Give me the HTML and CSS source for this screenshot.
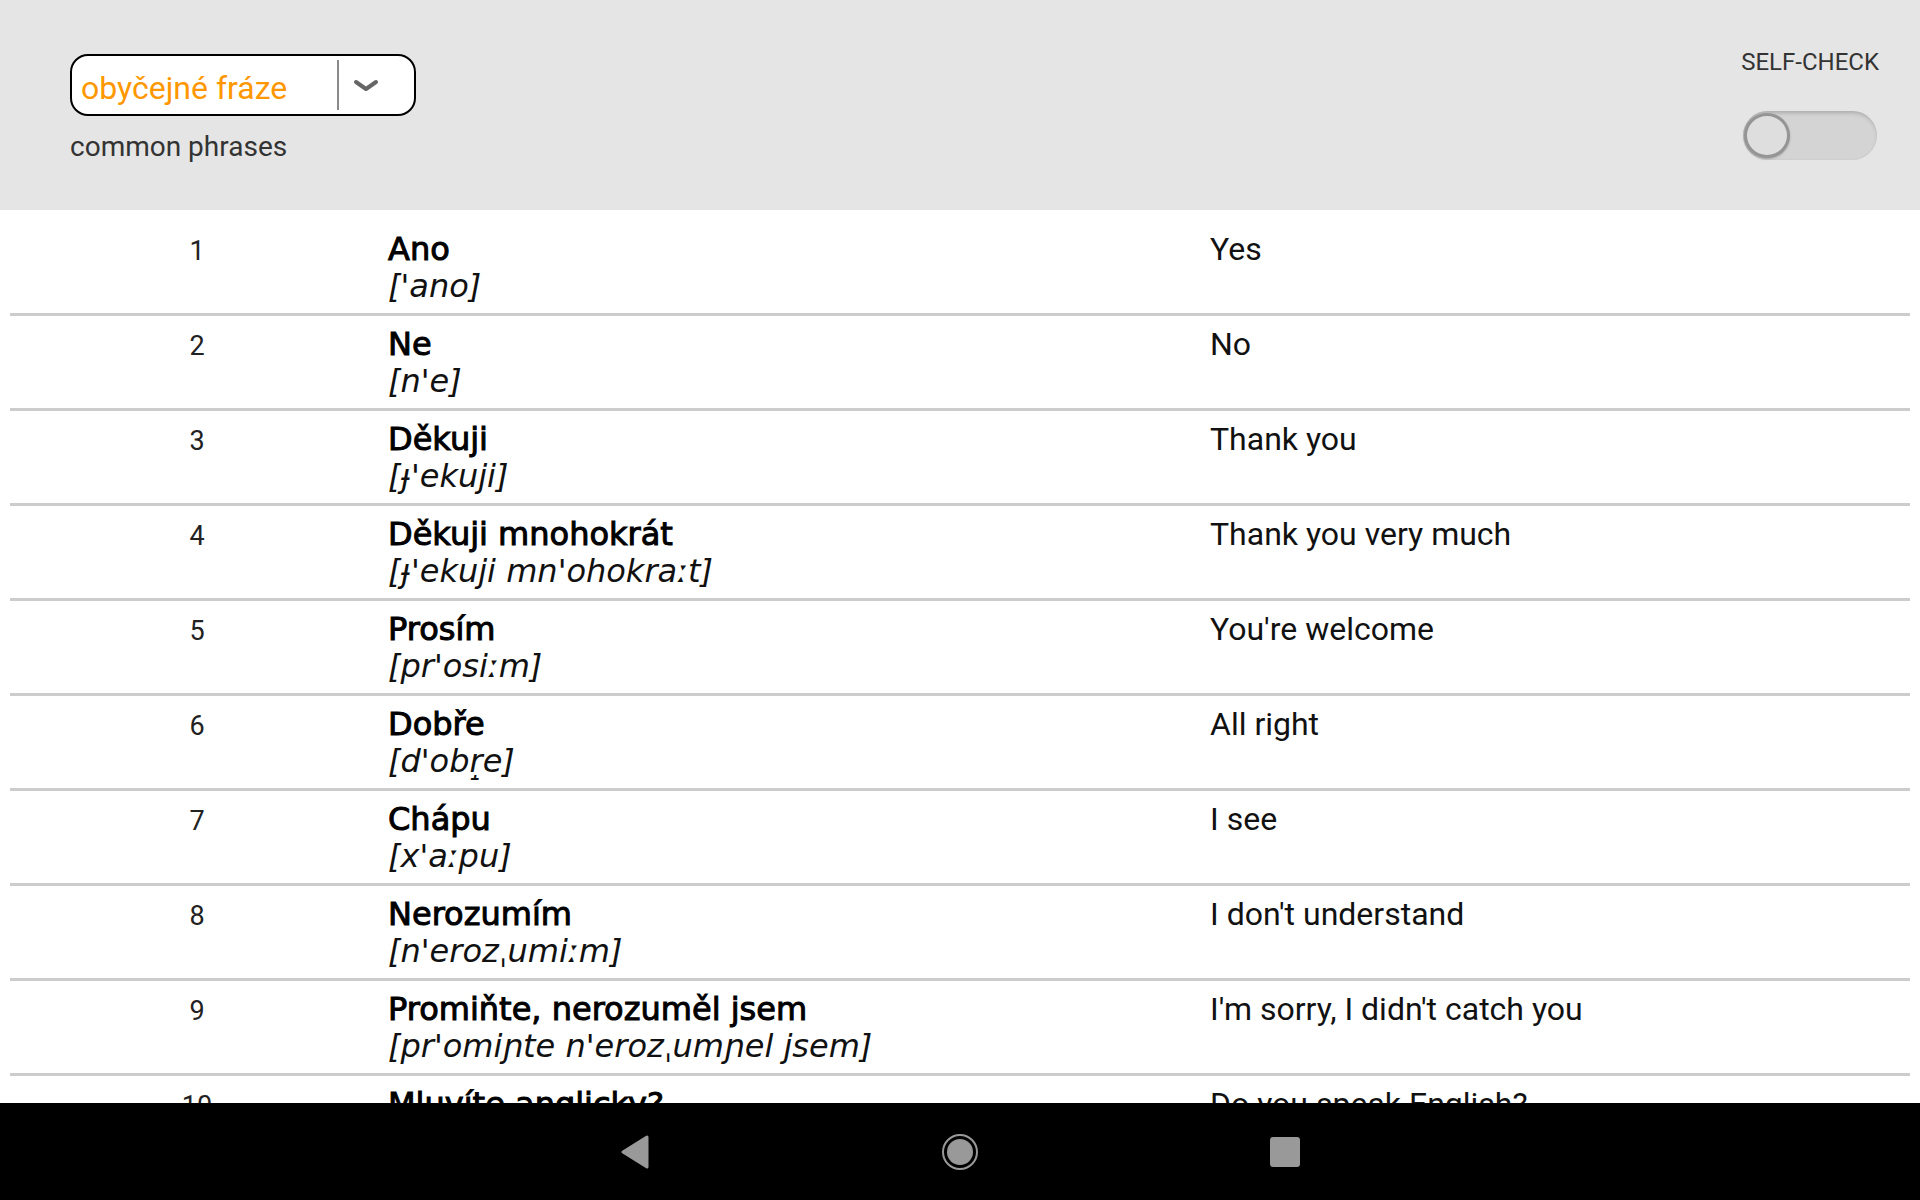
FILE: index.html
```html
<!DOCTYPE html>
<html lang="cs">
  <head>
    <meta charset="UTF-8" />
    <meta name="viewport" content="width=device-width, initial-scale=1.0" />
    <title>Phrasebook</title>
    <link rel="stylesheet" href="styles.css">
  </head>

  <body>
    <div class="screen">
      <!-- top bar -->
      <div class="top">
        <div class="topic">
          <div class="select">
            <span class="select-text">obyčejné fráze</span>
            <span class="select-line"></span>
            <svg class="select-arrow" width="26" height="16" viewBox="0 0 26 16">
              <path d="M3 4 L13 11 L23 4" fill="none" stroke="#666" stroke-width="4" stroke-linecap="round" stroke-linejoin="round" />
            </svg>
          </div>
          <div class="topic-en">common phrases</div>
        </div>
        <div class="check">
          <div class="check-label">SELF-CHECK</div>
          <div class="switch"><span class="thumb"></span></div>
        </div>
      </div>

      <!-- phrase list -->
      <ul class="list">
        <li class="row">
          <span class="num">1</span>
          <div class="cz"><b>Ano</b><i>['ano]</i></div>
          <span class="en">Yes</span>
        </li>
        <li class="row">
          <span class="num">2</span>
          <div class="cz"><b>Ne</b><i>[n'e]</i></div>
          <span class="en">No</span>
        </li>
        <li class="row">
          <span class="num">3</span>
          <div class="cz"><b>Děkuji</b><i>[ɟ'ekuji]</i></div>
          <span class="en">Thank you</span>
        </li>
        <li class="row">
          <span class="num">4</span>
          <div class="cz"><b>Děkuji mnohokrát</b><i>[ɟ'ekuji mn'ohokraːt]</i></div>
          <span class="en">Thank you very much</span>
        </li>
        <li class="row">
          <span class="num">5</span>
          <div class="cz"><b>Prosím</b><i>[pr'osiːm]</i></div>
          <span class="en">You're welcome</span>
        </li>
        <li class="row">
          <span class="num">6</span>
          <div class="cz"><b>Dobře</b><i>[d'obr̝e]</i></div>
          <span class="en">All right</span>
        </li>
        <li class="row">
          <span class="num">7</span>
          <div class="cz"><b>Chápu</b><i>[x'aːpu]</i></div>
          <span class="en">I see</span>
        </li>
        <li class="row">
          <span class="num">8</span>
          <div class="cz"><b>Nerozumím</b><i>[n'erozˌumiːm]</i></div>
          <span class="en">I don't understand</span>
        </li>
        <li class="row">
          <span class="num">9</span>
          <div class="cz"><b>Promiňte, nerozuměl jsem</b><i>[pr'omiɲte n'erozˌumɲel jsem]</i></div>
          <span class="en">I'm sorry, I didn't catch you</span>
        </li>
        <li class="row">
          <span class="num">10</span>
          <div class="cz"><b>Mluvíte anglicky?</b><i>[ml'uviːte 'anglɪtskɪ]</i></div>
          <span class="en">Do you speak English?</span>
        </li>
      </ul>

      <!-- android navigation -->
      <div class="nav">
        <span class="nav-btn">
          <svg width="30" height="34" viewBox="0 0 30 34">
            <path d="M27 2 L27 32 L3 17 Z" fill="#999" stroke="#999" stroke-width="3" stroke-linejoin="round" />
          </svg>
        </span>
        <span class="nav-btn">
          <svg width="38" height="38" viewBox="0 0 38 38">
            <circle cx="19" cy="19" r="17" fill="none" stroke="#999" stroke-width="2" />
            <circle cx="19" cy="19" r="13" fill="#999" />
          </svg>
        </span>
        <span class="nav-btn">
          <span class="square"></span>
        </span>
      </div>
    </div>
  </body>
</html>
```

FILE: styles.css
```css
* {
  margin: 0;
  padding: 0;
  box-sizing: border-box;
}

html,
body {
  height: 100%;
  overflow: hidden;
}

body {
  font-family: Roboto, "Liberation Sans", sans-serif;
  background-color: #fff;
  color: #000;
}

ul {
  list-style: none;
}

.screen {
  height: 1200px;
  display: flex;
  flex-direction: column;
}

/* 顶部 */
.top {
  height: 210px;
  flex-shrink: 0;
  background-color: #e5e5e5;
  display: flex;
  justify-content: space-between;
  align-items: flex-start;
}
.topic {
  padding: 54px 0 0 70px;
}
.select {
  width: 346px;
  height: 62px;
  border: 2px solid #000;
  border-radius: 18px;
  background-color: #fff;
  display: flex;
  align-items: flex-start;
}
.select-text {
  width: 265px;
  padding: 10px 0 0 9px;
  line-height: 44px;
  font-size: 32px;
  color: #ff9800;
  white-space: nowrap;
}
.select-line {
  width: 2px;
  height: 50px;
  margin-top: 4px;
  background-color: #8a8a8a;
}
.select-arrow {
  margin: 22px 0 0 14px;
}
.topic-en {
  margin-top: 15px;
  font-size: 28px;
  line-height: 32px;
  color: #333;
}

.check {
  padding: 48px 41px 0 0;
  display: flex;
  flex-direction: column;
  align-items: flex-end;
}
.check-label {
  font-size: 24px;
  line-height: 28px;
  color: #333;
}
.switch {
  width: 134px;
  height: 49px;
  margin: 35px 2px 0 0;
  border-radius: 25px;
  background-color: #d4d4d4;
  box-shadow: inset 1px 2px 4px rgba(0, 0, 0, 0.2);
  padding: 2px 0 0 1px;
}
.thumb {
  display: block;
  width: 46px;
  height: 45px;
  border-radius: 50%;
  background-color: #dedede;
  border: 3px solid #959595;
  box-shadow: 0 1px 2px rgba(0, 0, 0, 0.25);
}

/* 列表 */
.list {
  flex: 1;
  overflow: hidden;
  padding: 11px 10px 0;
}
.row {
  height: 95px;
  padding: 12px 0 0;
  border-bottom: 3px solid #ccc;
  display: grid;
  grid-template-columns: 374px 818px 1fr;
  column-gap: 4px;
  align-items: baseline;
}
.num {
  text-align: center;
  font-size: 27px;
  line-height: 33px;
  color: #222;
}
/* 捷克语：常规字重加描边 */
.cz b {
  display: block;
  font-family: "DejaVu Sans", sans-serif;
  font-weight: normal;
  font-size: 32px;
  line-height: 33px;
  -webkit-text-stroke: 1px #000;
  white-space: nowrap;
}
.cz i {
  display: block;
  font-family: "DejaVu Sans", sans-serif;
  font-style: oblique;
  font-size: 32px;
  line-height: 40px;
  color: #111;
  white-space: nowrap;
}
.en {
  font-size: 32px;
  line-height: 33px;
  color: #111;
}

/* 底部导航 */
.nav {
  height: 97px;
  flex-shrink: 0;
  background-color: #000;
  display: flex;
  justify-content: center;
  align-items: center;
  gap: 265px;
}
.nav-btn {
  width: 60px;
  height: 40px;
  display: flex;
  justify-content: center;
  align-items: center;
}
.square {
  width: 30px;
  height: 30px;
  border-radius: 3px;
  background-color: #999;
}
```
